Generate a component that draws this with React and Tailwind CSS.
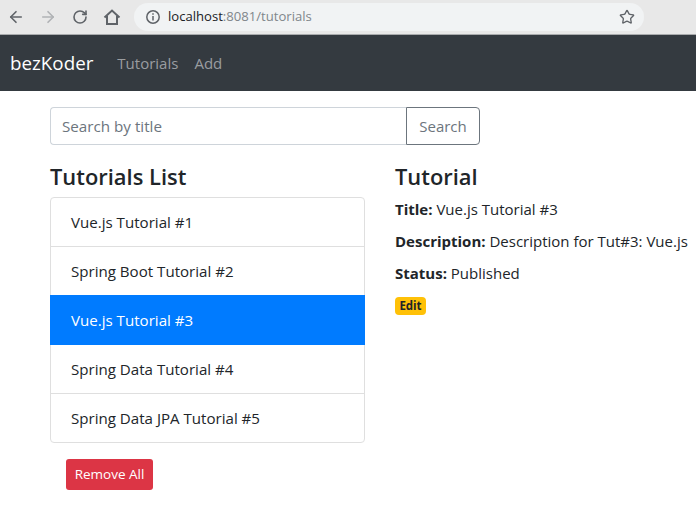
import { ArrowLeft, ArrowRight, RotateCw, Star } from "lucide-react";

const tutorials = [
  "Vue.js Tutorial #1",
  "Spring Boot Tutorial #2",
  "Vue.js Tutorial #3",
  "Spring Data Tutorial #4",
  "Spring Data JPA Tutorial #5",
];

const rowStyles = [
  "flex h-[49px] items-center border-b border-[#dfdfdf] pl-[20px]",
  "flex h-[48px] items-center pl-[20px]",
  "-mx-px flex h-[50px] items-center bg-[#007bff] pl-[21px] text-white",
  "flex h-[49px] items-center border-b border-[#dfdfdf] pl-[20px]",
  "flex h-[48px] items-center pl-[20px]",
];

const BrowserBar = () => {
  return (
    <div className="flex h-[35px] items-center border-b border-[#a9abad] bg-[#e8e8e8]">
      <div className="flex w-[134px] items-center pl-[7px] text-[#5f6368]">
        <ArrowLeft size={18} strokeWidth={2.2} />
        <ArrowRight size={18} strokeWidth={2.2} className="ml-[14px] text-[#b0b2b5]" />
        <RotateCw size={16} strokeWidth={2.4} className="ml-[15px]" />
        <svg width="18" height="18" viewBox="0 0 18 18" className="ml-[15px]" fill="none" stroke="#5f6368" strokeWidth="2">
          <path d="M1.5 9.5 9 2.5l7.5 7M4 8v8h10V8" />
        </svg>
      </div>
      <div className="flex h-[28px] w-[510px] items-center rounded-full bg-[#f1f3f4] pl-[11px] pr-[9px]">
        <svg width="16" height="16" viewBox="0 0 16 16" fill="none" stroke="#5f6368" strokeWidth="1.5">
          <circle cx="8" cy="8" r="6.2" />
          <path d="M8 7v4.4M8 4.2v1.6" />
        </svg>
        <span className="ml-[7px] text-[13.1px] text-[#202124]">
          localhost<span className="text-[#80868b]">:8081/tutorials</span>
        </span>
        <Star size={16} strokeWidth={2} className="ml-auto text-[#5f6368]" />
      </div>
    </div>
  );
};

const App = () => {
  return (
    <div className="h-[524px] w-[696px] overflow-hidden bg-white font-['Open_Sans','Noto_Sans',sans-serif] text-[#212529]">
      <BrowserBar />
      <nav className="flex h-[56px] items-center bg-[#343a40] pl-[10px] pt-[1px]">
        <span className="text-[18.8px] text-white">bezKoder</span>
        <span className="ml-[24px] text-[15px] text-[#9a9da0]">Tutorials</span>
        <span className="ml-[16px] text-[15px] text-[#9a9da0]">Add</span>
      </nav>
      <div className="pl-[50px] pt-[16px]">
        <div className="flex h-[38px] w-[430px]">
          <div className="flex w-[356px] items-center rounded-l-[4px] border border-r-0 border-[#ced4da] pl-[11px] text-[15.2px] text-[#6c757d]">
            Search by title
          </div>
          <button className="w-[74px] rounded-r-[4px] border border-[#6c757d] text-[15px] text-[#6c757d]">
            Search
          </button>
        </div>
        <div className="mt-[16px] flex">
          <div className="w-[315px]">
            <h4 className="h-[36px] text-[21.9px] leading-[32px] font-semibold">Tutorials List</h4>
            <ul className="rounded-[4px] border border-[#dfdfdf] text-[15.1px]">
              {tutorials.map((name, i) => (
                <li key={name} className={rowStyles[i]}>
                  {name}
                </li>
              ))}
            </ul>
            <button className="ml-[16px] mt-[16px] h-[31px] w-[87px] rounded-[3px] bg-[#dc3545] text-[13.5px] text-white">
              Remove All
            </button>
          </div>
          <div className="ml-[30px] whitespace-nowrap text-[15px]">
            <h4 className="h-[36px] text-[21.9px] leading-[32px] font-semibold">Tutorial</h4>
            <p className="h-[32px] leading-[24px]">
              <strong>Title:</strong> Vue.js Tutorial #3
            </p>
            <p className="h-[32px] leading-[24px]">
              <strong>Description:</strong> Description for Tut#3: Vue.js
            </p>
            <p className="h-[32px] leading-[24px]">
              <strong>Status:</strong> Published
            </p>
            <span className="inline-block h-[18px] w-[31px] rounded-[4px] bg-[#ffc107] text-center text-[11.5px] leading-[18px] font-bold">
              Edit
            </span>
          </div>
        </div>
      </div>
    </div>
  );
};

export default App;
